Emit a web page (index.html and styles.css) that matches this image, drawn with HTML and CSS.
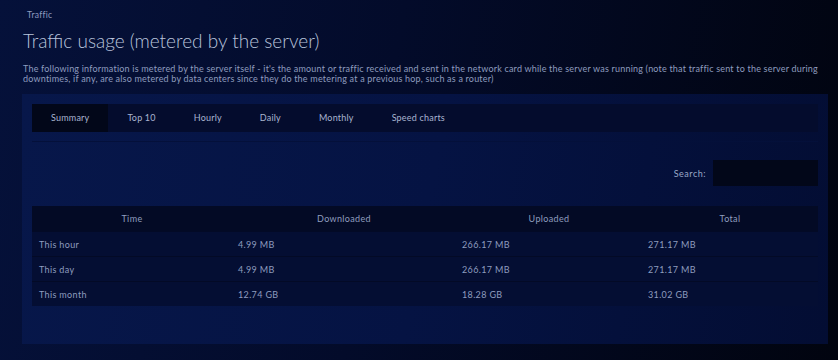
FILE: index.html
```html
<!DOCTYPE html>
<html>
<head>
<meta charset="utf-8">
<link rel="stylesheet" href="styles.css">
</head>
<body>
<div class="page">
  <div class="crumb">Traffic</div>
  <h1 class="title">Traffic usage (metered by the server)</h1>
  <p class="desc">The following information is metered by the server itself - it's the amount or traffic received and sent in the network card while the server was running (note that traffic sent to the server during downtimes, if any, are also metered by data centers since they do the metering at a previous hop, such as a router)</p>
  <div class="panel">
    <div class="tabs">
      <div class="tab active">Summary</div>
      <div class="tab">Top 10</div>
      <div class="tab">Hourly</div>
      <div class="tab">Daily</div>
      <div class="tab">Monthly</div>
      <div class="tab">Speed charts</div>
    </div>
    <div class="sep"></div>
    <div class="searchrow">
      <label class="searchlabel">Search:</label>
      <div class="searchinput"></div>
    </div>
    <table class="tbl">
      <colgroup><col class="c1"><col class="c2"><col class="c3"><col class="c4"></colgroup>
      <thead>
        <tr><th>Time</th><th>Downloaded</th><th>Uploaded</th><th>Total</th></tr>
      </thead>
      <tbody>
        <tr><td>This hour</td><td>4.99 MB</td><td>266.17 MB</td><td>271.17 MB</td></tr>
        <tr><td>This day</td><td>4.99 MB</td><td>266.17 MB</td><td>271.17 MB</td></tr>
        <tr><td>This month</td><td>12.74 GB</td><td>18.28 GB</td><td>31.02 GB</td></tr>
      </tbody>
    </table>
  </div>
</div>
</body>
</html>
```

FILE: styles.css
```css
html, body {
  margin: 0;
  height: 100%;
}
body {
  background: linear-gradient(100deg, #05113a 0%, #030b2a 45%, #01040f 100%);
  font-family: Lato, "Open Sans", sans-serif;
  color: #98a6c6;
  letter-spacing: 0.3px;
  overflow: hidden;
}
.page {
  padding: 9px 10px 0 22px;
}
.crumb {
  font-size: 8.5px;
  line-height: 12px;
  margin-left: 5px;
  color: #8f9dc0;
}
.title {
  margin: 8px 0 0 1px;
  font-size: 19px;
  font-weight: 300;
  line-height: 24px;
  letter-spacing: 0;
  color: #b9c4dc;
}
.desc {
  margin: 11px 0 0 1px;
  font-size: 9px;
  line-height: 10px;
  letter-spacing: 0.2px;
  color: #8e9cbf;
  max-width: 800px;
}
.panel {
  margin-top: 10px;
  width: 786px;
  padding: 10px 10px 38px 10px;
  background: linear-gradient(100deg, #07174a 0%, #051343 50%, #030d33 100%);
}
.tabs {
  display: flex;
  height: 28px;
  background: #040c2d;
}
.tab {
  padding: 0 19px;
  font-size: 9px;
  line-height: 28px;
  letter-spacing: 0.2px;
  color: #a8b4d0;
}
.tab.active {
  background: #020719;
}
.sep {
  margin-top: 9px;
  height: 1px;
  background: #04103a;
}
.searchrow {
  display: flex;
  justify-content: flex-end;
  align-items: center;
  gap: 7px;
  margin-top: 18px;
}
.searchlabel {
  font-size: 9px;
  letter-spacing: 0.5px;
  color: #9aa8c8;
}
.searchinput {
  width: 105px;
  height: 26px;
  background: #020719;
}
.tbl {
  margin-top: 20px;
  width: 786px;
  border-collapse: collapse;
  table-layout: fixed;
  font-size: 9px;
  letter-spacing: 0.35px;
}
.c1 { width: 200px; }
.c2 { width: 224px; }
.c3 { width: 186px; }
.c4 { width: 176px; }
.tbl th {
  height: 25px;
  padding: 0;
  font-weight: 400;
  text-align: center;
  background: #030a25;
  color: #8f9dbf;
}
.tbl td {
  height: 24px;
  padding: 0 0 0 6px;
  text-align: left;
  background: #040e33;
  border-top: 1px solid #030a26;
  color: #8e9cbf;
}
.tbl td:first-child {
  padding-left: 7px;
}
```
